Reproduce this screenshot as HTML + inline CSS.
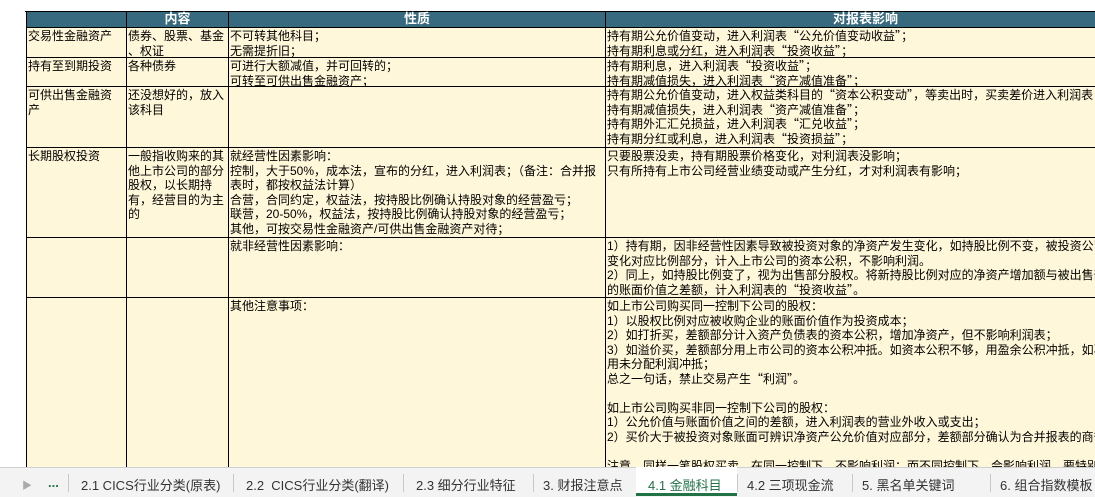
<!DOCTYPE html>
<html><head><meta charset="utf-8"><style>
body{margin:0;width:1095px;height:496px;overflow:hidden;background:#fff;font-family:"Liberation Sans","Noto Sans CJK SC","WenQuanYi Zen Hei",sans-serif;font-size:12px;position:relative}
.c{position:absolute;background:#fff7d9;border-right:1px solid #000;border-bottom:1px solid #000;box-sizing:border-box;line-height:14.5px;padding:1px 1px;overflow:hidden;white-space:pre;color:#000}
.q{font-family:"Noto Sans CJK SC",sans-serif}
.h{position:absolute;background:#376a7f;color:#fff;font-weight:bold;text-align:center;border-right:1px solid #000;border-bottom:1px solid #000;box-sizing:border-box;line-height:14px;top:12px;height:16px;font-size:13px}
#tabs{position:absolute;left:0;top:467px;width:1095px;height:29px;background:#f3f3f3;border-top:1px solid #d0d0d0;font-size:13px;color:#333}
#tabs span{position:absolute;top:7px}
.sep{position:absolute;top:6px;width:1px;height:18px;background:#c8c8c8}
</style></head><body>
<div style="position:absolute;left:25px;top:11px;width:1070px;height:1px;background:#000"></div>
<div style="position:absolute;left:26px;top:11px;width:1px;height:456px;background:#000"></div>
<div class="h" style="left:27px;width:100px"></div>
<div class="h" style="left:127px;width:102px">内容</div>
<div class="h" style="left:229px;width:377px">性质</div>
<div class="h" style="left:606px;width:520px">对报表影响</div>

<div class="c" style="left:27px;top:28px;width:100px;height:30px">交易性金融资产</div>
<div class="c" style="left:127px;top:28px;width:102px;height:30px">债券、股票、基金
、权证</div>
<div class="c" style="left:229px;top:28px;width:377px;height:30px">不可转其他科目；
无需提折旧；</div>
<div class="c" style="left:606px;top:28px;width:520px;height:30px">持有期公允价值变动，进入利润表<span class="q">“</span>公允价值变动收益<span class="q">”</span>；
持有期利息或分红，进入利润表<span class="q">“</span>投资收益<span class="q">”</span>；</div>

<div class="c" style="left:27px;top:58px;width:100px;height:29px">持有至到期投资</div>
<div class="c" style="left:127px;top:58px;width:102px;height:29px">各种债券</div>
<div class="c" style="left:229px;top:58px;width:377px;height:29px">可进行大额减值，并可回转的；
可转至可供出售金融资产；</div>
<div class="c" style="left:606px;top:58px;width:520px;height:29px">持有期利息，进入利润表<span class="q">“</span>投资收益<span class="q">”</span>；
持有期减值损失，进入利润表<span class="q">“</span>资产减值准备<span class="q">”</span>；</div>

<div class="c" style="left:27px;top:87px;width:100px;height:61px">可供出售金融资
产</div>
<div class="c" style="left:127px;top:87px;width:102px;height:61px">还没想好的，放入
该科目</div>
<div class="c" style="left:229px;top:87px;width:377px;height:61px"></div>
<div class="c" style="left:606px;top:87px;width:520px;height:61px">持有期公允价值变动，进入权益类科目的<span class="q">“</span>资本公积变动<span class="q">”</span>，等卖出时，买卖差价进入利润表
持有期减值损失，进入利润表<span class="q">“</span>资产减值准备<span class="q">”</span>；
持有期外汇汇兑损益，进入利润表<span class="q">“</span>汇兑收益<span class="q">”</span>；
持有期分红或利息，进入利润表<span class="q">“</span>投资损益<span class="q">”</span>；</div>

<div class="c" style="left:27px;top:148px;width:100px;height:90px">长期股权投资</div>
<div class="c" style="left:127px;top:148px;width:102px;height:90px">一般指收购来的其
他上市公司的部分
股权，以长期持
有，经营目的为主
的</div>
<div class="c" style="left:229px;top:148px;width:377px;height:90px">就经营性因素影响：
控制，大于50%，成本法，宣布的分红，进入利润表；（备注：合并报
表时，都按权益法计算）
合营，合同约定，权益法，按持股比例确认持股对象的经营盈亏；
联营，20-50%，权益法，按持股比例确认持股对象的经营盈亏；
其他，可按交易性金融资产/可供出售金融资产对待；</div>
<div class="c" style="left:606px;top:148px;width:520px;height:90px">只要股票没卖，持有期股票价格变化，对利润表没影响；
只有所持有上市公司经营业绩变动或产生分红，才对利润表有影响；</div>

<div class="c" style="left:27px;top:238px;width:100px;height:60px"></div>
<div class="c" style="left:127px;top:238px;width:102px;height:60px"></div>
<div class="c" style="left:229px;top:238px;width:377px;height:60px">就非经营性因素影响：</div>
<div class="c" style="left:606px;top:238px;width:520px;height:60px">1）持有期，因非经营性因素导致被投资对象的净资产发生变化，如持股比例不变，被投资公司
变化对应比例部分，计入上市公司的资本公积，不影响利润。
2）同上，如持股比例变了，视为出售部分股权。将新持股比例对应的净资产增加额与被出售部分
的账面价值之差额，计入利润表的<span class="q">“</span>投资收益<span class="q">”</span>。</div>

<div class="c" style="left:27px;top:298px;width:100px;height:180px"></div>
<div class="c" style="left:127px;top:298px;width:102px;height:180px"></div>
<div class="c" style="left:229px;top:298px;width:377px;height:180px">其他注意事项：</div>
<div class="c" style="left:606px;top:298px;width:520px;height:180px">如上市公司购买同一控制下公司的股权：
1）以股权比例对应被收购企业的账面价值作为投资成本；
2）如打折买，差额部分计入资产负债表的资本公积，增加净资产，但不影响利润表；
3）如溢价买，差额部分用上市公司的资本公积冲抵。如资本公积不够，用盈余公积冲抵，如再不够
用未分配利润冲抵；
总之一句话，禁止交易产生<span class="q">“</span>利润<span class="q">”</span>。

如上市公司购买非同一控制下公司的股权：
1）公允价值与账面价值之间的差额，进入利润表的营业外收入或支出；
2）买价大于被投资对象账面可辨识净资产公允价值对应部分，差额部分确认为合并报表的商誉
 
注意，同样一笔股权买卖，在同一控制下，不影响利润；而不同控制下，会影响利润，要特别</div>

<div id="tabs">
<span style="left:22px;color:#aaa;font-size:10px;top:9px">▶</span>
<span style="left:48px;color:#217346;font-weight:bold">...</span>
<div class="sep" style="left:68px"></div>
<span style="left:81px">2.1 CICS行业分类(原表)</span>
<div class="sep" style="left:233px"></div>
<span style="left:246px">2.2&nbsp; CICS行业分类(翻译)</span>
<div class="sep" style="left:403px"></div>
<span style="left:416px">2.3 细分行业特征</span>
<div class="sep" style="left:533px"></div>
<span style="left:543px">3. 财报注意点</span>
<div class="sep" style="left:636px"></div>
<div style="position:absolute;left:636px;top:-1px;width:101px;height:28px;background:#fff"></div>
<span style="left:648px;color:#217346">4.1 金融科目</span>
<div style="position:absolute;left:636px;top:25px;width:101px;height:3px;background:#217346"></div>
<div class="sep" style="left:737px"></div>
<span style="left:747px">4.2 三项现金流</span>
<div class="sep" style="left:852px"></div>
<span style="left:862px">5. 黑名单关键词</span>
<div class="sep" style="left:990px"></div>
<span style="left:1000px">6. 组合指数模板</span>
</div>
</body></html>
